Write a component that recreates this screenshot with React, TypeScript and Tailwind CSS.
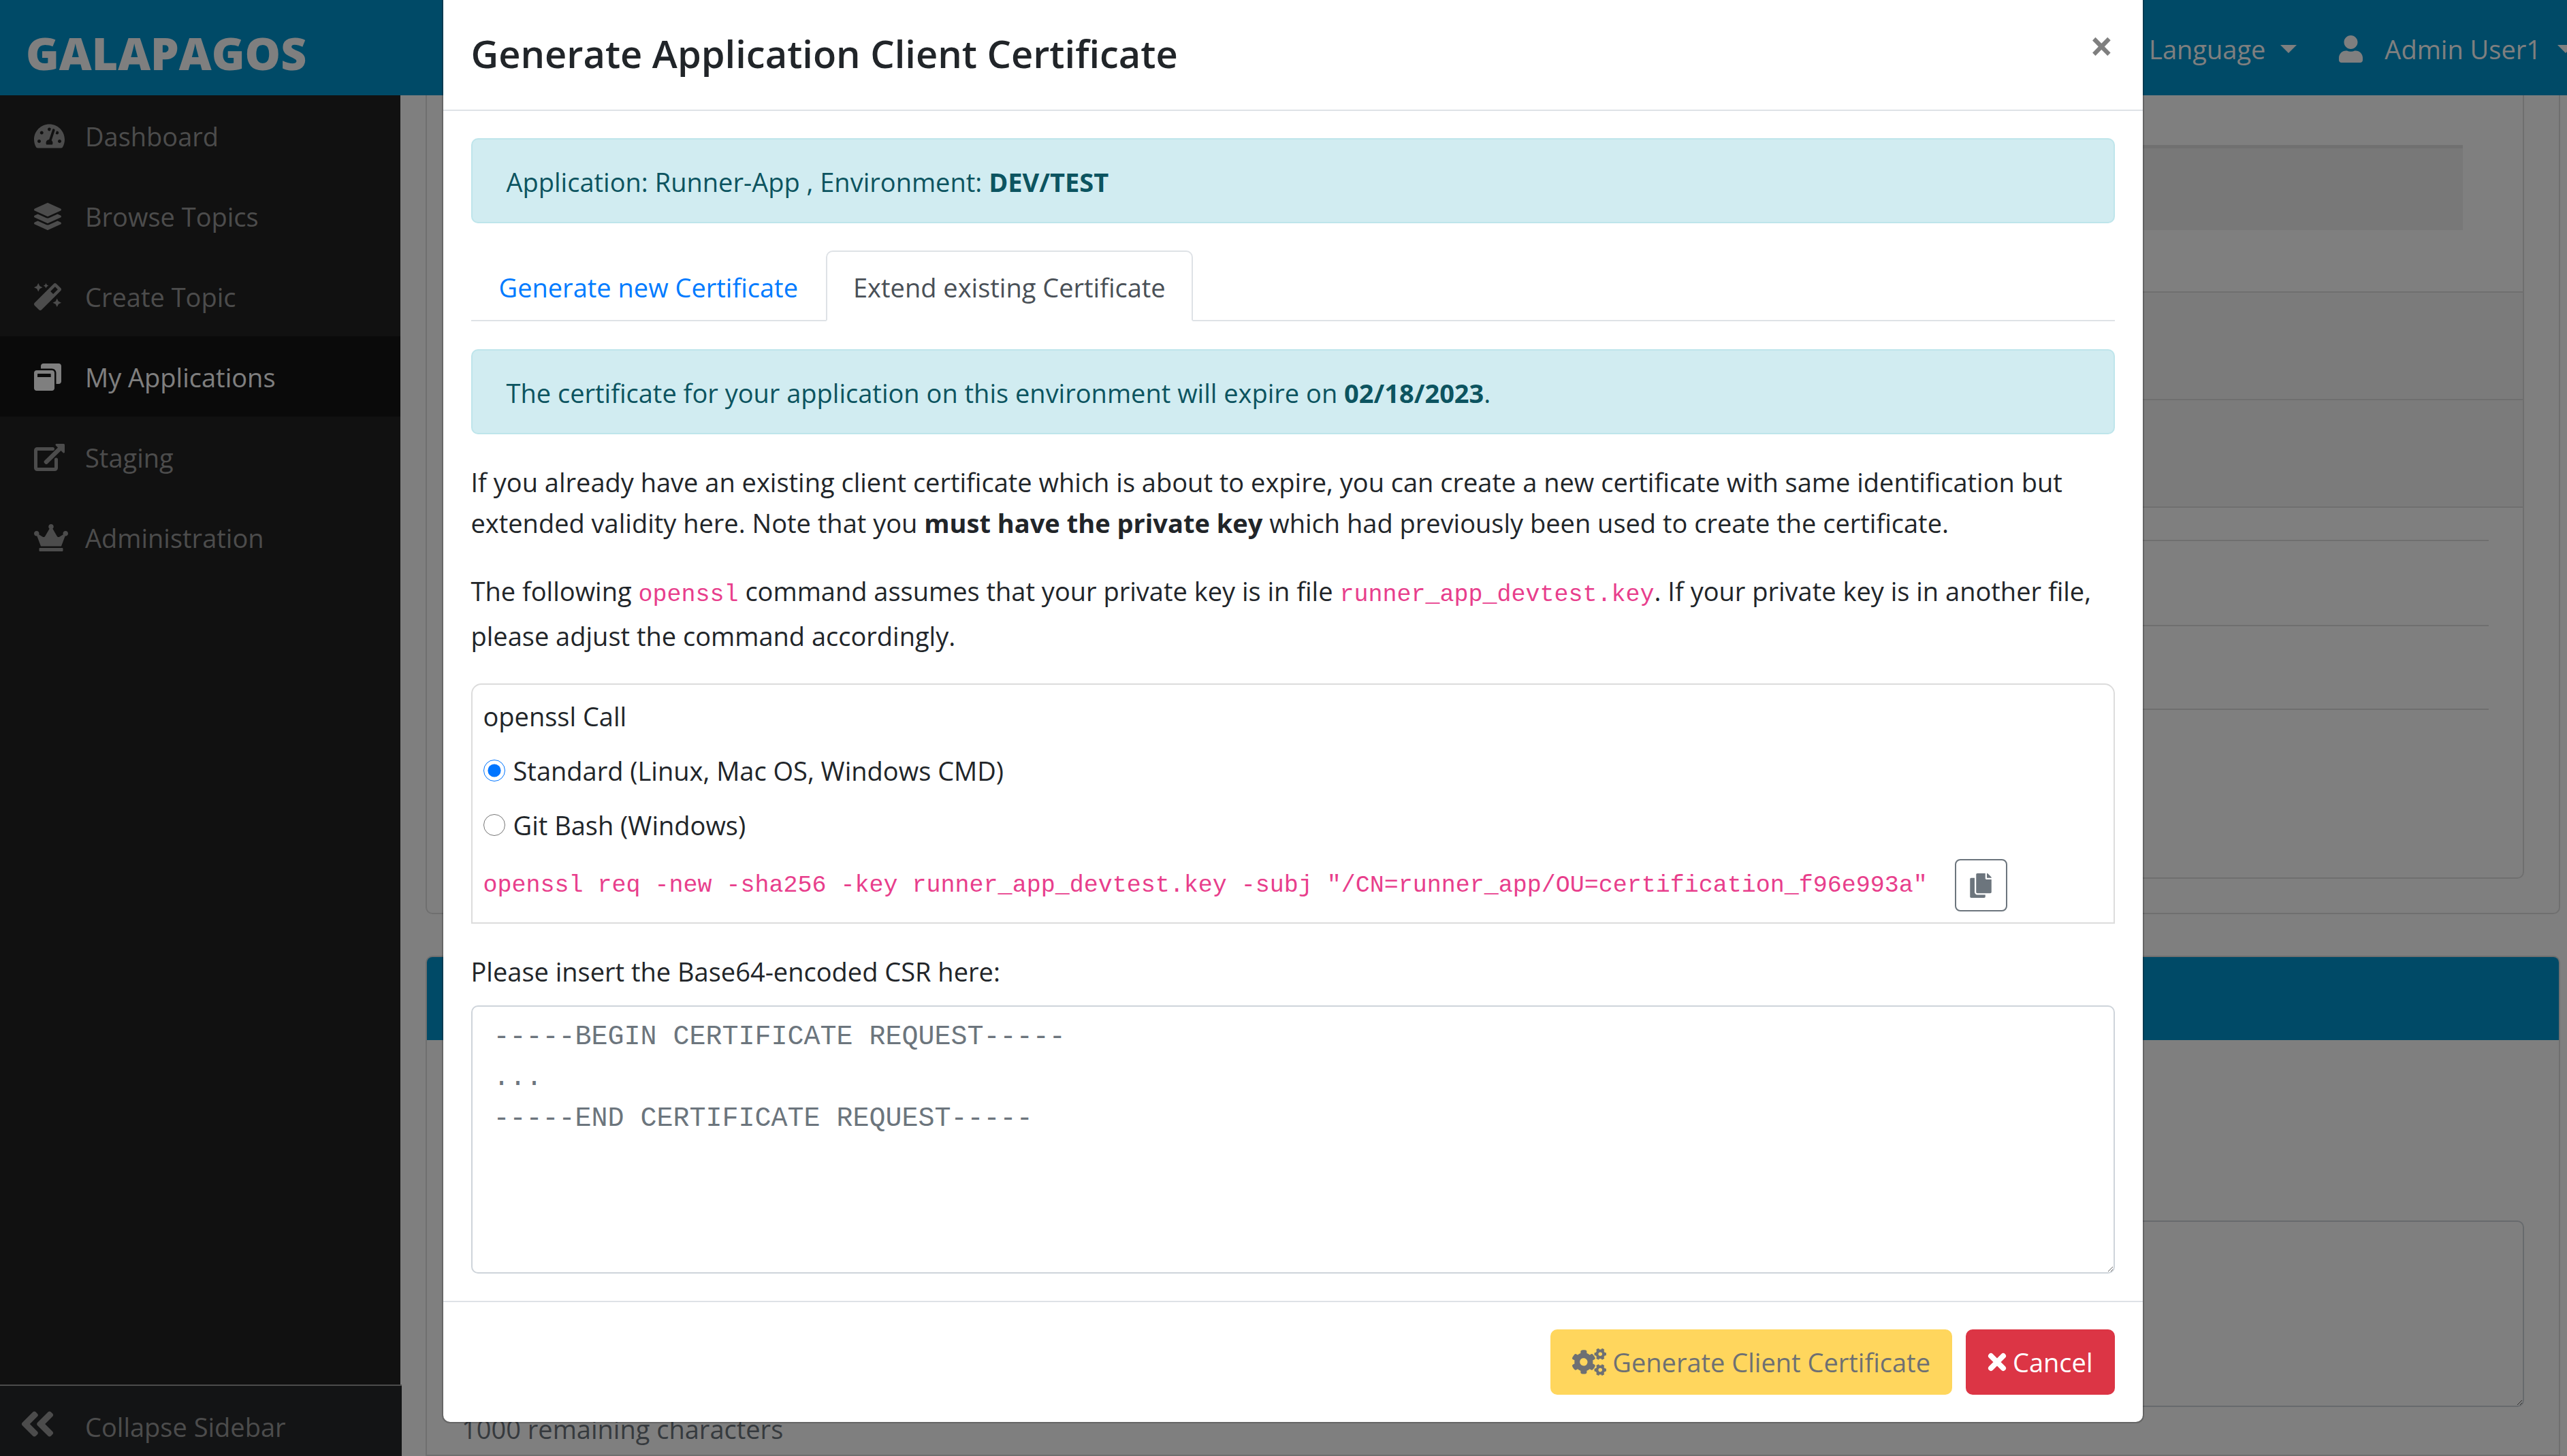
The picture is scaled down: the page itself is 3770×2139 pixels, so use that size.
import { useState } from "react";
import type { ReactNode } from "react";
import {
  FaAngleDoubleLeft,
  FaCogs,
  FaCopy,
  FaCrown,
  FaLayerGroup,
  FaMagic,
  FaTachometerAlt,
  FaUser,
  FaWindowRestore,
} from "react-icons/fa";

function ExternalLinkIcon() {
  return (
    <svg viewBox="0 0 90 80" fill="none" className="h-[40px] w-[45px]" aria-hidden="true">
      <path
        d="M55 15H9a4 4 0 0 0-4 4V71a4 4 0 0 0 4 4h52a4 4 0 0 0 4-4V46"
        stroke="currentColor"
        strokeWidth="10"
        strokeLinecap="round"
      />
      <path
        d="M66 0h21a3 3 0 0 1 3 3v21c0 3-3 4-5 2l-6-6-40 39a5 5 0 0 1-6 0l-3-3a5 5 0 0 1 0-6l40-39-6-6c-2-2-1-5 2-5Z"
        fill="currentColor"
      />
    </svg>
  );
}

function CrossIcon() {
  return (
    <svg viewBox="0 0 56 56" className="size-[28px]" aria-hidden="true">
      <path
        d="M10 10 46 46M46 10 10 46"
        stroke="currentColor"
        strokeWidth="16"
        strokeLinecap="round"
      />
    </svg>
  );
}

const NAV_ITEMS: { label: string; icon: ReactNode; active?: boolean }[] = [
  { label: "Dashboard", icon: <FaTachometerAlt className="h-[40px] w-[45px]" /> },
  { label: "Browse Topics", icon: <FaLayerGroup className="size-[40px]" /> },
  { label: "Create Topic", icon: <FaMagic className="size-[40px]" /> },
  {
    label: "My Applications",
    icon: <FaWindowRestore className="size-[40px]" />,
    active: true,
  },
  { label: "Staging", icon: <ExternalLinkIcon /> },
  { label: "Administration", icon: <FaCrown className="h-[40px] w-[50px]" /> },
];

function Caret() {
  return (
    <span className="h-0 w-0 border-x-[12px] border-t-[12px] border-x-transparent border-t-white" />
  );
}

function TopBar() {
  return (
    <header className="flex h-[140px] shrink-0 items-center justify-between bg-[#0094ce] pr-[17px] pl-[38px] text-white">
      <a href="#home" className="pt-[14px] text-[66px] leading-[80px] font-extrabold">
        GALAPAGOS
      </a>
      <nav className="flex items-center gap-[62px] pt-[4px]">
        <button type="button" className="flex items-center gap-[22px]">
          Language
          <Caret />
        </button>
        <button type="button" className="flex items-center">
          <FaUser className="mr-[32px] h-[40px] w-[35px]" />
          <span className="mr-[24px]">Admin User1</span>
          <Caret />
        </button>
      </nav>
    </header>
  );
}

function Sidebar() {
  return (
    <aside className="flex w-[588px] shrink-0 flex-col bg-[#222222] text-[#999999]">
      <nav className="flex-1">
        <ul>
          {NAV_ITEMS.map(({ label, icon, active }) => (
            <li key={label}>
              <a
                href="#nav"
                className={
                  active
                    ? "flex h-[118px] items-center bg-[#141414] pt-[2px] pl-[50px] text-white"
                    : "flex h-[118px] items-center pt-[2px] pl-[50px]"
                }
              >
                <span className="w-[75px]">{icon}</span>
                {label}
              </a>
            </li>
          ))}
        </ul>
      </nav>
      <button
        type="button"
        className="flex h-[105px] w-[590px] items-center border-t-2 border-[#999999] bg-[#27292b] pt-[16px] pl-[29px]"
      >
        <span className="w-[96px] pb-[8px]">
          <FaAngleDoubleLeft className="h-[60px] w-[52px]" />
        </span>
        Collapse Sidebar
      </button>
    </aside>
  );
}

function PageContent() {
  return (
    <main className="flex min-w-0 flex-1 flex-col px-[37px]">
      <section className="rounded-b-[10px] border-2 border-t-0 border-[#dfdfdf] px-[51px] pb-[50px]">
        <div className="rounded-b-[10px] border-2 border-t-0 border-[#dfdfdf]">
          <div className="pt-[73px] pr-[88px] pb-[90px] pl-[50px]">
            <div className="h-[125px] border-t-[5px] border-[#e0e0e0] bg-[#f0f0f0]" />
          </div>
          <div className="h-[158px] border-t-2 border-[#dfdfdf] bg-[#f7f7f7]" />
          <div className="h-[160px] border-y-2 border-[#dfdfdf] bg-[#f7f7f7]" />
          <div className="px-[50px] pt-[47px] pb-[246px]">
            <div className="h-[125px] border-t-2 border-[#dfdfdf]" />
            <div className="h-[125px] border-y-2 border-[#dfdfdf]" />
          </div>
        </div>
      </section>
      <section className="mt-[61px] flex-1 rounded-t-[10px] border-2 border-[#dfdfdf]">
        <div className="h-[122px] rounded-t-[8px] bg-[#0094ce]" />
        <div className="px-[51px] pt-[265px]">
          <textarea
            aria-label="Description"
            className="mb-[2px] block h-[274px] w-full rounded-[10px] border-2 border-[#ced4da]"
          />
          <p className="text-[#6c757d]">1000 remaining characters</p>
        </div>
      </section>
    </main>
  );
}

function InfoAlert({ children }: { children: ReactNode }) {
  return (
    <div className="mb-[40px] rounded-[10px] border-2 border-[#bee5eb] bg-[#d1ecf1] px-[50px] pt-[32px] pb-[29px] text-[#0c5460]">
      {children}
    </div>
  );
}

function Code({ children }: { children: ReactNode }) {
  return (
    <code className="font-['Liberation_Mono',monospace] text-[35px] text-[#e83e8c]">
      {children}
    </code>
  );
}

function OpensslBox() {
  const [shell, setShell] = useState("standard");
  const options = [
    { id: "standard", label: "Standard (Linux, Mac OS, Windows CMD)" },
    { id: "gitbash", label: "Git Bash (Windows)" },
  ];
  return (
    <div className="mb-[40px] flex flex-col items-start gap-[20px] rounded-t-[15px] border-2 border-[#dcdcdc] p-[16px]">
      <div>openssl Call</div>
      {options.map((option) => (
        <label key={option.id} className="flex items-center gap-[12px]">
          <input
            type="radio"
            name="shell"
            className="size-[32px] accent-[#0075ff]"
            checked={shell === option.id}
            onChange={() => setShell(option.id)}
          />
          {option.label}
        </label>
      ))}
      <div className="flex items-center gap-[40px]">
        <Code>
          openssl req -new -sha256 -key runner_app_devtest.key -subj
          "/CN=runner_app/OU=certification_f96e993a"
        </Code>
        <button
          type="button"
          aria-label="Copy"
          className="flex size-[77px] items-center justify-center rounded-[8px] border-2 border-[#6c757d] text-[#6c757d]"
        >
          <FaCopy className="h-[36px] w-[32px]" />
        </button>
      </div>
    </div>
  );
}

function CertificateDialog() {
  return (
    <div className="absolute inset-0 flex items-start justify-center bg-black/50">
      <div
        role="dialog"
        aria-labelledby="dialog-title"
        className="-mt-[12px] w-full max-w-[2500px] rounded-[12px] border-2 border-black/20 bg-white bg-clip-padding text-[#212529]"
      >
        <div className="flex items-center justify-between border-b-2 border-[#dee2e6] px-[41px] pt-[43px] pb-[38px]">
          <h4 id="dialog-title" className="text-[56px] leading-[90px] font-semibold">
            Generate Application Client Certificate
          </h4>
          <button
            type="button"
            aria-label="Close"
            className="mr-[2px] pb-[22px] text-[60px] leading-[60px] font-bold text-black/50"
          >
            ×
          </button>
        </div>
        <div className="px-[41px] py-[40px]">
          <InfoAlert>
            Application: Runner-App , Environment: <strong>DEV/TEST</strong>
          </InfoAlert>
          <div role="tablist" className="mb-[41px] flex border-b-2 border-[#dee2e6]">
            <button
              type="button"
              role="tab"
              className="px-[41px] pt-[24px] pb-[18px] text-[#007bff]"
            >
              Generate new Certificate
            </button>
            <button
              type="button"
              role="tab"
              aria-selected="true"
              className="-mb-[2px] rounded-t-[10px] border-2 border-[#dee2e6] border-b-white bg-white px-[38px] pt-[22px] pb-[18px] text-[#495057]"
            >
              Extend existing Certificate
            </button>
          </div>
          <InfoAlert>
            The certificate for your application on this environment will expire on{" "}
            <strong>02/18/2023</strong>.
          </InfoAlert>
          <p className="mb-[40px]">
            If you already have an existing client certificate which is about to expire, you can
            create a new certificate with same identification but extended validity here. Note that
            you <strong>must have the private key</strong> which had previously been used to create
            the certificate.
          </p>
          <p className="mb-[40px]">
            The following <Code>openssl</Code> command assumes that your private key is in file{" "}
            <Code>runner_app_devtest.key</Code>. If your private key is in another file, please
            adjust the command accordingly.
          </p>
          <OpensslBox />
          <label htmlFor="csr" className="mb-[20px] block">
            Please insert the Base64-encoded CSR here:
          </label>
          <textarea
            id="csr"
            placeholder={
              "-----BEGIN CERTIFICATE REQUEST-----\n...\n-----END CERTIFICATE REQUEST-----"
            }
            className="block h-[394px] w-full rounded-[10px] border-2 border-[#ced4da] px-[31px] py-[15px] font-['Liberation_Mono',monospace] text-[40px] leading-[60px] placeholder:text-[#6c757d]"
          />
        </div>
        <div className="flex justify-end gap-[20px] border-t-2 border-[#dee2e6] px-[41px] py-[40px]">
          <button
            type="button"
            disabled
            className="flex items-center gap-[9px] rounded-[10px] border-2 border-[#ffc107] bg-[#ffc107] px-[30px] py-[16px] text-[#212529] opacity-65"
          >
            <FaCogs className="h-[40px] w-[50px]" />
            Generate Client Certificate
          </button>
          <button
            type="button"
            className="flex items-center gap-[9px] rounded-[10px] border-2 border-[#dc3545] bg-[#dc3545] px-[30px] py-[16px] text-white"
          >
            <CrossIcon />
            Cancel
          </button>
        </div>
      </div>
    </div>
  );
}

export default function App() {
  return (
    <div className="h-screen overflow-hidden bg-white font-['Open_Sans','Noto_Sans',sans-serif] text-[38px] leading-[60px]">
      <div className="relative -mr-[27px] flex h-full flex-col">
        <TopBar />
        <div className="flex min-h-0 flex-1">
          <Sidebar />
          <PageContent />
        </div>
        <CertificateDialog />
      </div>
    </div>
  );
}
